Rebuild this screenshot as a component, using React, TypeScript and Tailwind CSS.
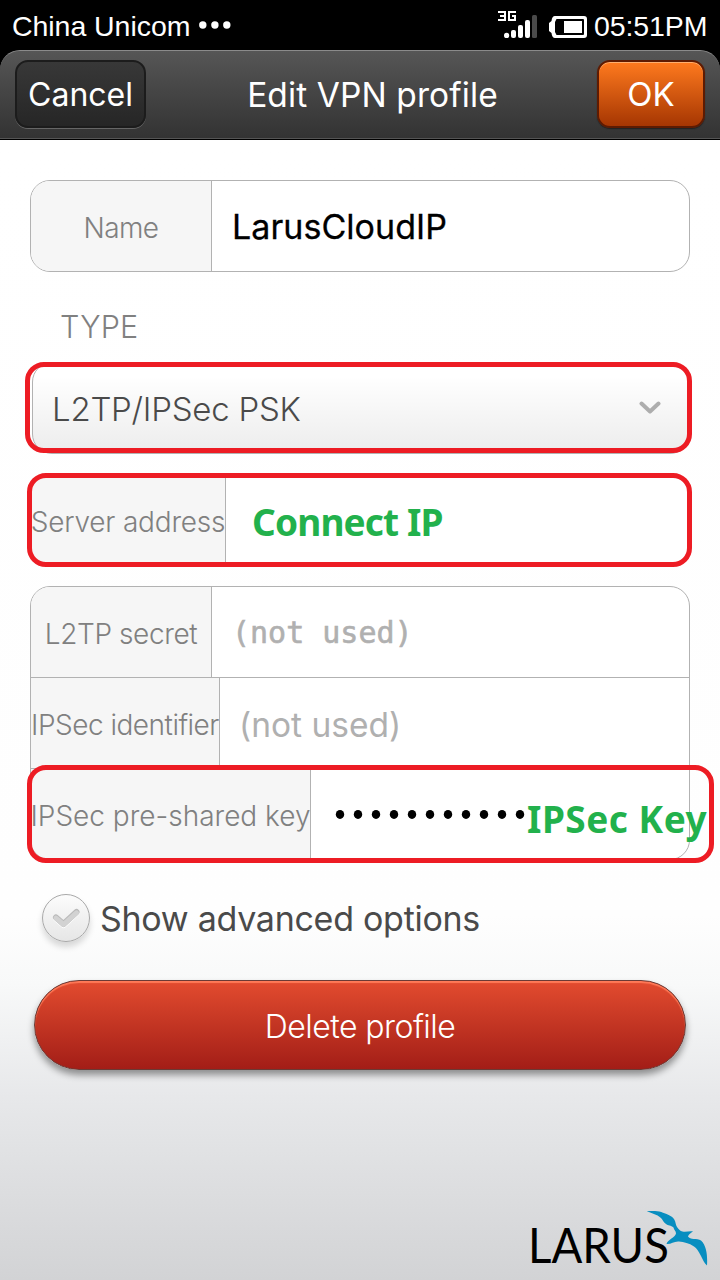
import type { ReactNode } from "react";

const light = "font-['Inter',sans-serif] font-light";

function StatusBar() {
  return (
    <div className="flex h-[50px] items-center bg-black pl-[12px] pr-3 text-white">
      <span className="relative top-[1px] w-[178px] font-['Liberation_Sans',sans-serif] text-[28.5px] leading-[40px] tracking-[-0.05px] whitespace-nowrap">China Unicom</span>
      <svg className="ml-[9px]" width="32" height="8" viewBox="0 0 32 8" fill="white">
        <circle cx="3.8" cy="4" r="3.7" />
        <circle cx="15.9" cy="4" r="3.7" />
        <circle cx="27.8" cy="4" r="3.7" />
      </svg>
      <svg className="ml-auto overflow-visible" width="90" height="30" viewBox="0 0 90 30">
        <path d="M0 2H7V10H0M2 6H7M18 2H11V10H17V6H14" fill="none" stroke="white" strokeWidth="2" />
        <circle cx="8.600" cy="25.400" r="2.600" fill="white" />
        <rect x="13" y="20" width="5" height="8" rx="2" fill="white" />
        <rect x="20" y="15" width="5" height="13" rx="2" fill="white" />
        <rect x="27" y="10" width="5" height="18" rx="2" fill="white" />
        <rect x="34" y="5" width="5" height="23" rx="1.500" fill="#4a4a4a" />
        <path d="M57 6H86Q89 6 89 9V25Q89 28 86 28H57Q54 28 53.500 23L51 21V13L53.500 11Q54 6 57 6Z" fill="white" />
        <path d="M58.500 9H85Q86 9 86 10V24Q86 25 85 25H58.500L57 22V12Z" fill="black" />
        <rect x="66" y="11" width="18" height="12" fill="white" />
      </svg>
      <span className="relative top-[1px] ml-[6px] w-[114px] font-['Liberation_Sans',sans-serif] text-[28.5px] leading-[40px] tracking-[-0.1px] whitespace-nowrap">05:51PM</span>
    </div>
  );
}

function Header() {
  return (
    <div className="h-[90px] bg-black">
      <header className="flex h-[89px] items-start justify-between rounded-t-[20px] border-t border-b border-t-[#8b8b8b] border-b-[#555] bg-linear-to-b from-[#565656] to-[#333] px-[15px] pt-[9px] font-['Inter',sans-serif] text-white">
        <button className="h-[68px] w-[131px] rounded-[13px] border-2 border-[#1c1c1c] bg-linear-to-b from-[#383838] to-[#262626] pt-[2px] text-[32px] shadow-[0_1px_0_#666]">
          Cancel
        </button>
        <h1 className="pt-[10px] pl-[2px] text-[33.5px] leading-[50px] tracking-[0.1px] whitespace-nowrap">Edit VPN profile</h1>
        <button className="h-[68px] w-[108px] rounded-[13px] border-2 border-[#5e1b02] bg-linear-to-b from-[#ff7a1e] to-[#a63603] pt-[2px] text-[33px] shadow-[inset_0_1px_0_#ffb070,0_1px_1px_#222]">
          OK
        </button>
      </header>
    </div>
  );
}

function Row({ label, labelClass, children, first }: { label: string; labelClass: string; children?: ReactNode; first?: boolean }) {
  return (
    <div className={first ? "flex h-[90px]" : "flex h-[91px] border-t border-[#b2b2b2]"}>
      <div className={`flex shrink-0 items-center justify-center border-r border-[#b2b2b2] bg-[#f6f6f6] pt-1 text-[28px] text-[#808080] whitespace-nowrap ${light} ${labelClass}`}>
        {label}
      </div>
      <div className="flex items-center whitespace-nowrap">{children}</div>
    </div>
  );
}

const card = "overflow-hidden rounded-[20px] border border-[#b2b2b2] bg-white";

export default function App() {
  return (
    <div className="relative flex h-[1280px] w-[720px] flex-col overflow-hidden bg-white">
      <StatusBar />
      <Header />
      <main className="flex flex-1 flex-col bg-[linear-gradient(to_bottom,#fff_0%,#fefefe_68%,#f8f9f9_74%,#e7e8ea_84%,#d2d3d5_100%)] px-[30px] pt-[40px]">
        <section className={card}>
          <Row first label="Name" labelClass="w-[181px] tracking-[-0.6px]">
            <span className="pl-[20px] font-['Inter',sans-serif] text-[34px] tracking-[0.05px] text-black [-webkit-text-stroke:0.3px_#000]">LarusCloudIP</span>
          </Row>
        </section>

        <h2 className={`flex h-[90px] items-center pt-[20px] pl-[30px] text-[30.5px] tracking-[0.2px] text-[#808080] ${light}`}>TYPE</h2>

        <div className={`ml-[2px] flex h-[92px] items-center justify-between rounded-[20px] border border-[#b2b2b2] bg-linear-to-b from-white from-15% to-[#ececec] pr-[28px] pl-[19px] text-[33px] text-[#4a4a4a] ${light}`}>
          <span className="pt-[3px] tracking-[-0.25px] whitespace-nowrap">L2TP/IPSec PSK</span>
          <svg width="22" height="14" viewBox="0 0 22 14" fill="none" stroke="#adadad" strokeWidth="4" strokeLinecap="round" strokeLinejoin="round">
            <path d="M2.500 2.500L11 10.500L19.500 2.500" />
          </svg>
        </div>

        <section className={`mt-5 ${card}`}>
          <Row first label="Server address" labelClass="w-[195px] tracking-[-0.2px]">
            <span className="pl-[26px] pt-[4px] font-['Noto_Sans',sans-serif] text-[37px] font-bold tracking-[-0.85px] text-[#22b14c]">Connect IP</span>
          </Row>
        </section>

        <section className={`mt-5 ${card}`}>
          <Row first label="L2TP secret" labelClass="w-[181px] tracking-[-0.4px]">
            <span className="pl-[20px] font-['DejaVu_Sans_Mono',monospace] text-[30px] text-[#b0b0b0] [-webkit-text-stroke:0.6px_#b0b0b0]">(not used)</span>
          </Row>
          <Row label="IPSec identifier" labelClass="w-[189px] tracking-[-0.5px]">
            <span className="pl-[19px] pt-[4px] font-['Inter',sans-serif] text-[33.5px] text-[#b0b0b0]">(not used)</span>
          </Row>
          <Row label="IPSec pre-shared key" labelClass="w-[280px]">
            <svg className="ml-[24px]" width="192" height="10" viewBox="0 0 192 10">
              {Array.from({ length: 11 }, (_, i) => (
                <ellipse key={i} cx={5 + i * 18} cy="5.400" rx="4.200" ry="4.500" />
              ))}
            </svg>
          </Row>
        </section>

        <label className="mt-[34px] ml-[12px] flex h-[48px] items-center">
          <span className="flex h-12 w-12 items-center justify-center rounded-full border border-[#a9a9a9] bg-linear-to-b from-[#fcfcfc] to-[#e6e6e6] shadow-[0_5px_6px_rgba(0,0,0,0.15)]">
            <svg width="30" height="24" viewBox="0 0 30 24" fill="none" strokeLinecap="round" strokeLinejoin="round">
              <path d="M5 12.500L12.500 19L25.500 7" stroke="#fff" strokeWidth="6" />
              <path d="M5 11.500L12.500 18L25.500 6" stroke="#b9b9b9" strokeWidth="6" />
              <path d="M5 12.200L12.500 18.500L25.500 6.800" stroke="#d2d2d2" strokeWidth="5" />
            </svg>
          </span>
          <span className="pl-[10px] pt-[1px] font-['Inter',sans-serif] text-[34px] tracking-[-0.28px] text-[#4a4a4a] whitespace-nowrap">Show advanced options</span>
        </label>

        <button className={`mt-[38px] ml-[4px] h-[90px] w-[652px] rounded-[45px] border border-[#6b3a35] bg-linear-to-b from-[#e34b2f] to-[#a31d17] pt-[4px] text-[32px] tracking-[-0.55px] text-white shadow-[inset_0_2px_1px_#ff7a58,0_5px_7px_rgba(0,0,0,0.4)] ${light}`}>
          Delete profile
        </button>

        <div className="relative mt-auto mb-[10px] -mr-[18px] flex h-[62px] w-[180px] items-start self-end">
          <span className="origin-left scale-x-[0.93] pt-[16px] font-['Lato',sans-serif] text-[49px] leading-[40px] text-black">LARUS</span>
          <svg className="absolute top-[3px] right-0" width="62" height="56" viewBox="0 0 62 56" fill="#088ec0">
            <path d="M0.700 0C7 -0.400 13 0 17 1.700C22 3.500 26 5 28 8C30 11 29.500 14 31 16C33 18.500 34 20 36.500 20.500C40 21.500 44 19.500 47 20.500C45 22 42.500 23 42 25.500C44 29 51 27 55 29.500C61 35 61.500 46 61 54.500C58 52 57 49 55 45C52 40 51 37 48 35.500C43 32 38 31 33 30.500C28 30 25 33.500 20.500 33C22 28 29 27 30 22.500C30 20 28 19 27.500 16.500C25 14 22 15 20 13C17 11 17 9 15 7C11 3 5 2.500 0.700 0Z" />
          </svg>
        </div>
      </main>

      <div className="absolute top-[362px] left-[25px] h-[91px] w-[667px] rounded-[19px] border-[5px] border-[#ed1c24]" />
      <div className="absolute top-[473px] left-[27px] h-[94px] w-[665px] rounded-[19px] border-[5px] border-[#ed1c24]" />
      <div className="absolute top-[765px] left-[27px] h-[98px] w-[687px] rounded-[19px] border-[5px] border-[#ed1c24]" />
      <span className="absolute top-[793px] left-[527px] font-['Noto_Sans',sans-serif] text-[37px] leading-[52px] font-bold tracking-[0.5px] text-[#22b14c] whitespace-nowrap">IPSec Key</span>
    </div>
  );
}
